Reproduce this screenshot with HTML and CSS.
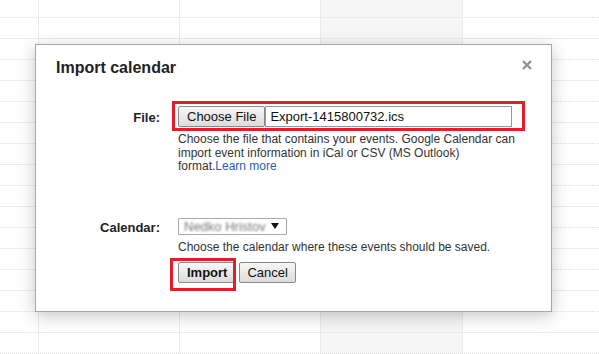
FILE: index.html
```html
<!DOCTYPE html>
<html lang="en">
  <head>
    <meta charset="UTF-8" />
    <title>Import calendar</title>
    <link rel="stylesheet" href="styles.css">
  </head>
  <body>
    <div class="sheet">
      <div class="cols">
        <div class="col edge"></div>
        <div class="col"></div>
        <div class="col"></div>
        <div class="col shade"></div>
        <div class="col"></div>
      </div>
      <div class="rows">
        <div class="row"></div><div class="row"></div><div class="row"></div>
        <div class="row"></div><div class="row"></div><div class="row"></div>
        <div class="row"></div><div class="row"></div><div class="row"></div>
        <div class="row"></div><div class="row"></div><div class="row"></div>
        <div class="row"></div><div class="row"></div><div class="row"></div>
        <div class="row"></div><div class="row"></div>
      </div>
    </div>

    <div class="dialog">
      <div class="title_row">
        <h1>Import calendar</h1>
        <svg class="close" width="10" height="10" viewBox="0 0 10 10">
          <path d="M1 1 L9 9 M9 1 L1 9" stroke="#8f8f8f" stroke-width="2.2" />
        </svg>
      </div>

      <div class="form">
        <label class="file_label">File:</label>
        <div>
          <div class="file_field marked">
            <span class="file_btn">Choose File</span>
            <span class="file_name">Export-1415800732.ics</span>
          </div>
          <p class="hint">
            Choose the file that contains your events. Google Calendar can
            import event information in iCal or CSV (MS Outlook)
            format.<a href="#">Learn more</a>
          </p>
        </div>

        <label class="cal_label">Calendar:</label>
        <div class="cal_field">
          <div class="select">
            <span class="blur">Nedko Hristov</span>
            <svg width="8" height="6" viewBox="0 0 8 6"><path d="M0 0 H8 L4 6 Z" fill="#111" /></svg>
          </div>
          <p class="hint">Choose the calendar where these events should be saved.</p>
          <div class="actions">
            <button class="btn primary marked_btn">Import</button>
            <button class="btn">Cancel</button>
          </div>
        </div>
      </div>
    </div>
  </body>
</html>
```

FILE: styles.css
```css
* {
  margin: 0;
  padding: 0;
  box-sizing: border-box;
}

body {
  font-family: "Liberation Sans", Arial, sans-serif;
  color: #222;
  overflow: hidden;
  background: white;
}

.sheet {
  display: grid;
  height: 100vh;
  overflow: hidden;

  > * {
    grid-area: 1 / 1;
  }

  .cols {
    display: flex;

    .col {
      flex: none;
      width: 141px;
      border-left: 1px solid #ebebeb;
    }

    .edge {
      width: 38px;
      border-left: none;
    }

    .shade {
      width: 142px;
      background: #f6f6f6;
    }
  }

  .rows {
    display: flex;
    flex-direction: column;

    .row {
      flex: none;
      height: 21px;
      border-bottom: 1px solid #ebebeb;

      &:nth-child(odd) {
        border-bottom: 1px dotted #dedede;
      }

      &:first-child {
        height: 18px;
      }
    }
  }
}

.dialog {
  position: absolute;
  left: 35px;
  top: 44px;
  width: 517px;
  height: 268px;
  background: white;
  border: 1px solid #a6a6a6;
  box-shadow: 0 4px 16px rgba(0, 0, 0, 0.22);
  padding: 14px 19px 0 20px;

  .title_row {
    display: flex;
    justify-content: space-between;
    align-items: flex-start;

    h1 {
      font-size: 16px;
      font-weight: bold;
      color: #222;
    }

    .close {
      margin-top: 1px;
    }
  }

  .form {
    display: grid;
    grid-template-columns: 104px 1fr;
    column-gap: 18px;
    margin-top: 29px;

    label {
      text-align: right;
      font-size: 13px;
      font-weight: bold;
      color: #222;
    }

    .file_label {
      padding-top: 4px;
    }

    .cal_label {
      margin-top: 43px;
      padding-top: 3px;
    }

    .cal_field {
      margin-top: 44px;
    }
  }

  .file_field {
    display: flex;
    width: 334px;
    height: 21px;
    font-size: 13px;

    .file_btn {
      display: flex;
      align-items: center;
      padding: 0 8px;
      background: linear-gradient(#f7f7f7, #dcdcdc);
      border: 1px solid #8a8a8a;
      border-radius: 2px;
      color: #111;
    }

    .file_name {
      flex: 1;
      display: flex;
      align-items: center;
      padding-left: 4px;
      border: 1px solid #7f9db9;
      color: #111;
    }
  }

  .marked,
  .marked_btn {
    position: relative;
  }

  .marked::after,
  .marked_btn::after {
    content: "";
    position: absolute;
    border: 3px solid #e31e26;
  }

  .marked::after {
    left: -6px;
    top: -5px;
    right: -13px;
    bottom: -4px;
  }

  .marked_btn::after {
    left: -9px;
    top: -5px;
    right: -1px;
    bottom: -9px;
  }

  .hint {
    margin-top: 6px;
    width: 345px;
    font-size: 12px;
    line-height: 13.5px;
    color: #333;

    a {
      color: #2a5db0;
      text-decoration: none;
    }
  }

  .select {
    display: flex;
    align-items: center;
    justify-content: space-between;
    width: 109px;
    height: 17px;
    padding: 0 7px 0 5px;
    border: 1px solid #a9a9a9;
    border-radius: 1px;
    font-size: 13px;

    .blur {
      color: #7a7a7a;
      filter: blur(1.1px);
    }
  }

  .actions {
    display: flex;
    gap: 3px;
    margin-top: 8px;

    .btn {
      height: 21px;
      padding: 0 7px;
      font-family: inherit;
      font-size: 13px;
      color: #111;
      background: linear-gradient(#f7f7f7, #dcdcdc);
      border: 1px solid #8a8a8a;
      border-radius: 2px;
    }

    .primary {
      font-weight: bold;
      padding: 0 8px;
    }
  }
}
```
